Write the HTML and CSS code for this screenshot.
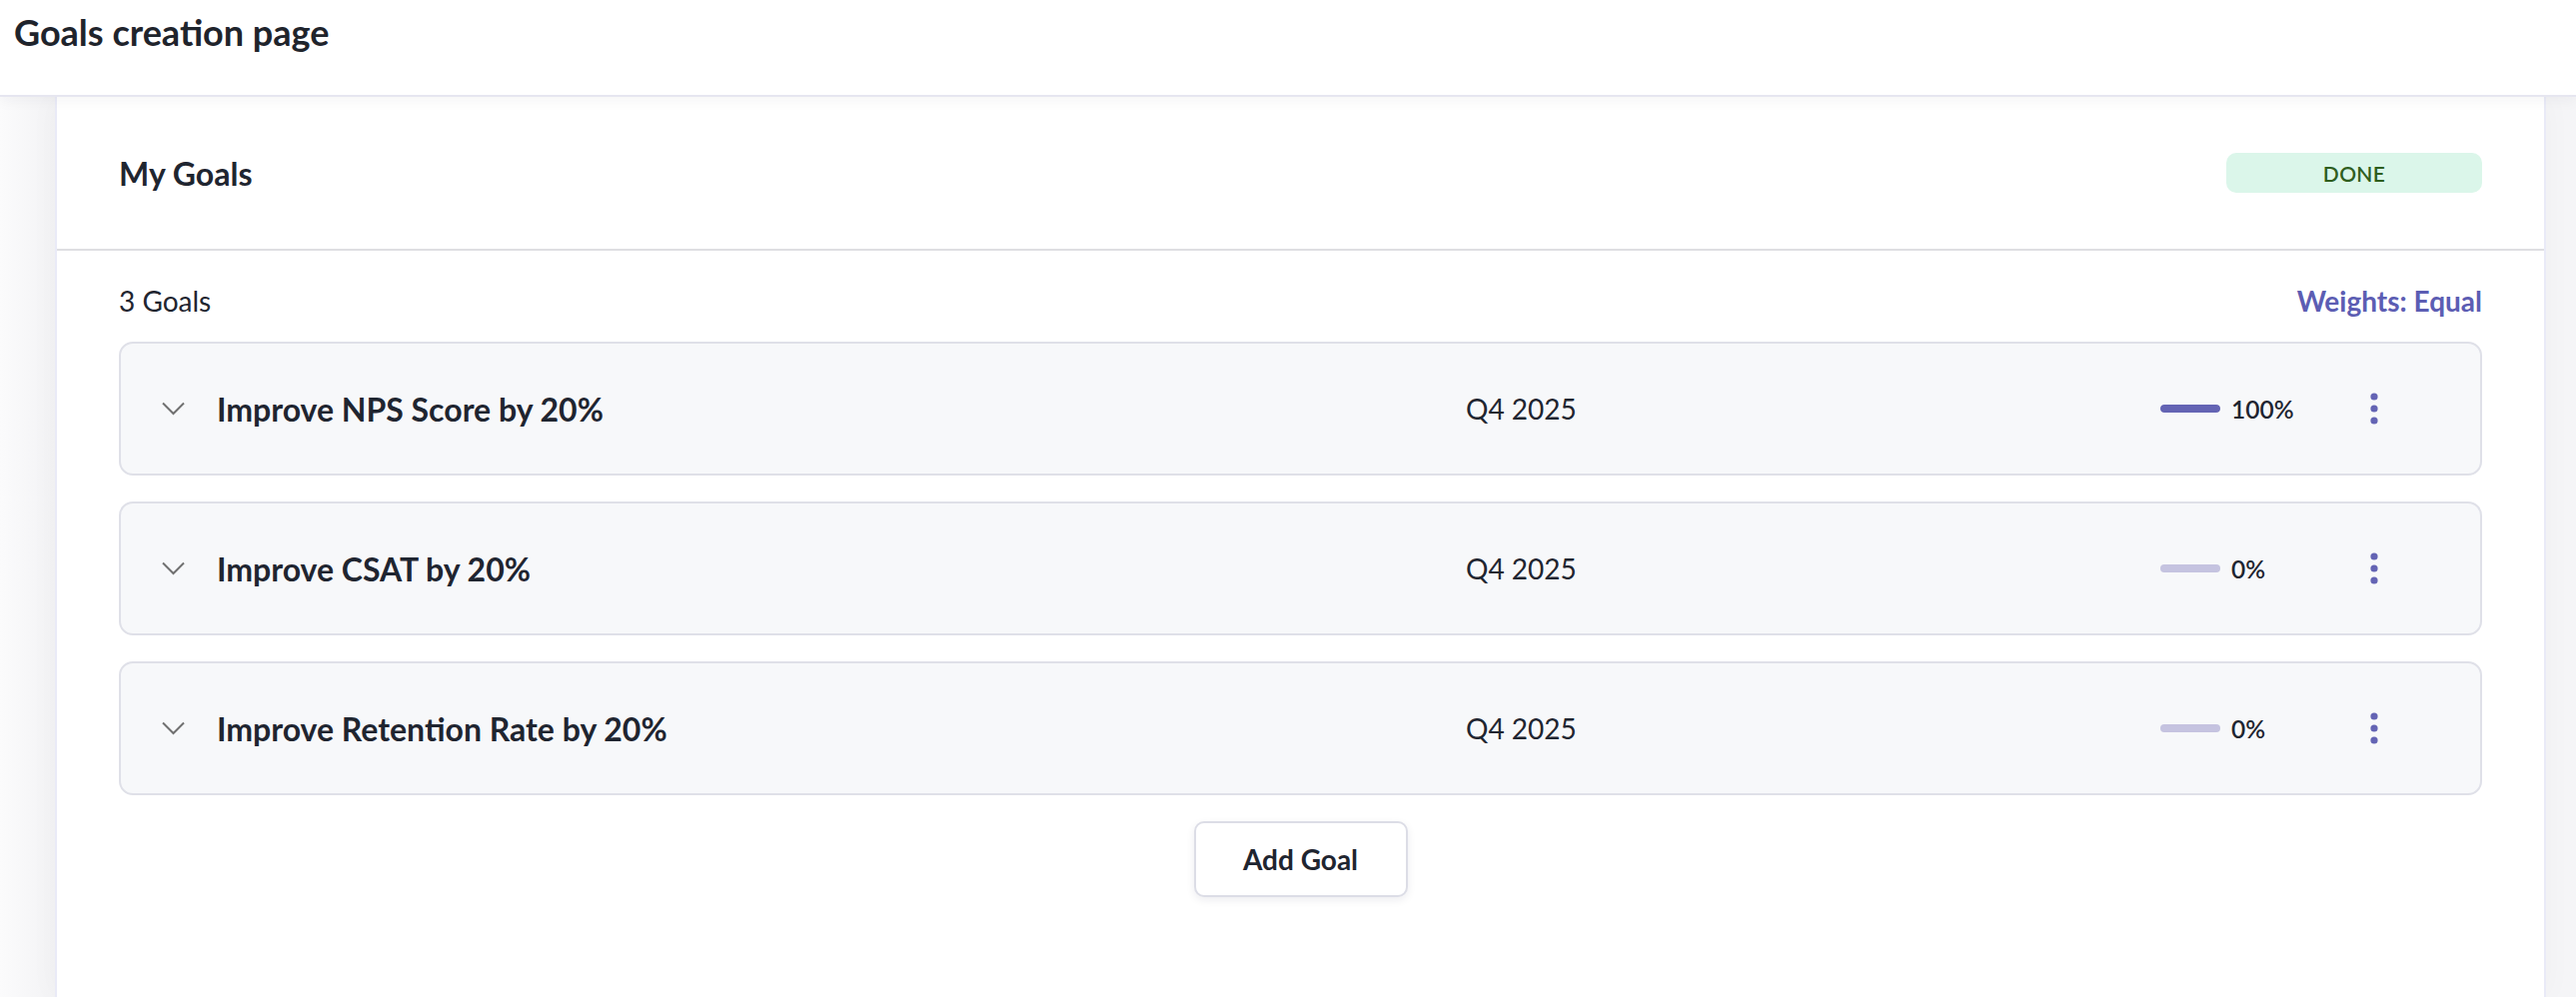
FILE: index.html
```html
<!DOCTYPE html>
<html lang="en">
<head>
<meta charset="utf-8">
<title>Goals creation page</title>
<link rel="stylesheet" href="styles.css">
</head>
<body>
<header class="topbar">
  <h1 class="page-title">Goals creation page</h1>
</header>
<main class="page">
  <section class="card">
    <div class="card-head">
      <h2 class="card-title">My Goals</h2>
      <span class="badge">DONE</span>
    </div>
    <div class="card-body">
      <div class="toolbar">
        <span class="count">3 Goals</span>
        <span class="weights">Weights: Equal</span>
      </div>
      <div class="goal-list">
        <div class="goal">
          <span class="chev"><svg width="23" height="14" viewBox="0 0 23 14"><polyline points="1,1.5 11.5,12 22,1.5" fill="none" stroke="#707070" stroke-width="2"/></svg></span>
          <span class="goal-name">Improve NPS Score by 20%</span>
          <span class="goal-date">Q4 2025</span>
          <span class="progress"><span class="bar"><span class="fill" style="width:100%"></span></span><span class="pct">100%</span></span>
          <span class="kebab"><svg width="8" height="32" viewBox="0 0 8 32"><circle cx="4" cy="4" r="3.6"/><circle cx="4" cy="16" r="3.6"/><circle cx="4" cy="28" r="3.6"/></svg></span>
        </div>
        <div class="goal">
          <span class="chev"><svg width="23" height="14" viewBox="0 0 23 14"><polyline points="1,1.5 11.5,12 22,1.5" fill="none" stroke="#707070" stroke-width="2"/></svg></span>
          <span class="goal-name">Improve CSAT by 20%</span>
          <span class="goal-date">Q4 2025</span>
          <span class="progress"><span class="bar"><span class="fill" style="width:0%"></span></span><span class="pct">0%</span></span>
          <span class="kebab"><svg width="8" height="32" viewBox="0 0 8 32"><circle cx="4" cy="4" r="3.6"/><circle cx="4" cy="16" r="3.6"/><circle cx="4" cy="28" r="3.6"/></svg></span>
        </div>
        <div class="goal">
          <span class="chev"><svg width="23" height="14" viewBox="0 0 23 14"><polyline points="1,1.5 11.5,12 22,1.5" fill="none" stroke="#707070" stroke-width="2"/></svg></span>
          <span class="goal-name">Improve Retention Rate by 20%</span>
          <span class="goal-date">Q4 2025</span>
          <span class="progress"><span class="bar"><span class="fill" style="width:0%"></span></span><span class="pct">0%</span></span>
          <span class="kebab"><svg width="8" height="32" viewBox="0 0 8 32"><circle cx="4" cy="4" r="3.6"/><circle cx="4" cy="16" r="3.6"/><circle cx="4" cy="28" r="3.6"/></svg></span>
        </div>
      </div>
      <div class="actions">
        <button class="add-btn" type="button">Add Goal</button>
      </div>
    </div>
  </section>
</main>
</body>
</html>
```
FILE: styles.css
```css
* { box-sizing: border-box; }
html, body { margin: 0; padding: 0; }
body {
  font-family: Lato, "Open Sans", "Liberation Sans", sans-serif;
  color: #1f2530;
  background: #f6f6f8;
  overflow: hidden;
  height: 998px;
}
.topbar {
  position: relative;
  z-index: 2;
  height: 97px;
  background: #ffffff;
  border-bottom: 2px solid #e6e6f0;
  box-shadow: 0 3px 14px rgba(30, 30, 60, 0.05);
  padding: 12px 14px 0;
}
.page-title {
  margin: 0;
  font-size: 36px;
  line-height: 40px;
  font-weight: 700;
  color: #1f242c;
}
.page {
  padding: 0 30px 0 55px;
  background: linear-gradient(90deg, #fbfbfc 0px, #f3f3f5 55px, #f5f5f7 2548px);
}
.card {
  background: #ffffff;
  border-left: 2px solid #e9eaf7;
  border-right: 2px solid #e9eaf7;
  min-height: 901px;
  box-shadow: 0 0 30px rgba(40, 40, 70, 0.03);
}
.card-head {
  height: 154px;
  border-bottom: 2px solid #dedee2;
  display: flex;
  align-items: center;
  justify-content: space-between;
  padding: 0 62px;
}
.card-title {
  margin: 0;
  font-size: 32px;
  font-weight: 700;
  color: #1f2530;
}
.badge {
  width: 256px;
  height: 40px;
  border-radius: 10px;
  background: #dbf6ea;
  color: #2f5e1e;
  font-size: 21px;
  font-weight: 600;
  display: flex;
  align-items: center;
  justify-content: center;
  letter-spacing: 0.3px;
}
.card-body {
  padding: 33px 62px 0;
}
.toolbar {
  display: flex;
  justify-content: space-between;
  align-items: center;
  height: 34px;
  margin-bottom: 24px;
  font-size: 28px;
}
.count { color: #1f2530; }
.weights { color: #5c5db3; font-weight: 700; }
.goal-list {
  display: flex;
  flex-direction: column;
  gap: 26px;
}
.goal {
  height: 134px;
  border: 2px solid #dfe0e8;
  border-radius: 14px;
  background: #f7f8fa;
  display: grid;
  grid-template-columns: 55px 1250px 1fr 194px 40px;
  align-items: center;
  padding: 0 86px 0 41px;
}
.chev { display: flex; align-items: center; }
.chev svg { display: block; }
.goal-name {
  font-size: 32px;
  font-weight: 700;
  color: #1f2530;
}
.goal-date {
  font-size: 28px;
  color: #1f2530;
}
.progress {
  display: flex;
  align-items: center;
  gap: 11px;
}
.bar {
  width: 60px;
  height: 8px;
  border-radius: 4px;
  background: #c5c3e0;
  overflow: hidden;
  display: block;
}
.fill {
  display: block;
  height: 100%;
  background: #6464b4;
  border-radius: 4px;
}
.pct {
  font-size: 24.5px;
  font-weight: 600;
  color: #1f2530;
}
.kebab {
  display: flex;
  justify-content: center;
  align-items: center;
  fill: #6464b4;
}
.kebab svg { display: block; }
.actions {
  display: flex;
  justify-content: center;
  padding-top: 26px;
}
.add-btn {
  width: 214px;
  height: 76px;
  border: 2px solid #dcdde6;
  border-radius: 10px;
  background: #ffffff;
  box-shadow: 0 3px 8px rgba(30, 30, 60, 0.08);
  font-family: Lato, "Open Sans", "Liberation Sans", sans-serif;
  font-size: 28px;
  font-weight: 700;
  color: #1f2530;
}
```
